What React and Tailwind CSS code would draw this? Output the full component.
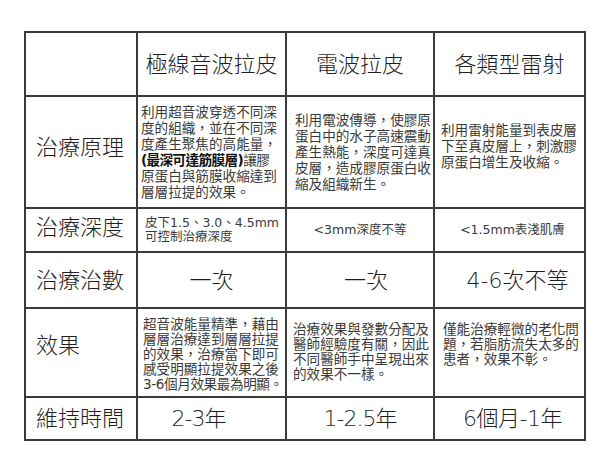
const font = { fontFamily: '"DejaVu Sans", "Noto Sans CJK TC", sans-serif' };

const cell = "border-2 border-[#3a3a3a] p-0";

const rows = [
  {
    label: "治療原理",
    h: "h-[112px]",
    labelCls: "align-top pt-[34px]",
    cells: [
      {
        cls: "align-top pt-[7px] pl-[3px] leading-[16px]",
        lines: [
          "利用超音波穿透不同深",
          "度的組織，並在不同深",
          "度產生聚焦的高能量，",
          <span className="tracking-[-0.6px]">
            <span className="font-bold text-[#111]">(最深可達筋膜層)</span>讓膠
          </span>,
          "原蛋白與筋膜收縮達到",
          "層層拉提的效果。",
        ],
      },
      {
        cls: "align-top pt-[15px] pl-[8px] leading-[16px]",
        lines: [
          "利用電波傳導，使膠原",
          "蛋白中的水子高速震動",
          "產生熱能，深度可達真",
          "皮層，造成膠原蛋白收",
          "縮及組織新生。",
        ],
      },
      {
        cls: "align-top pt-[25px] pl-[6px] leading-[16px]",
        lines: ["利用雷射能量到表皮層", "下至真皮層上，刺激膠", "原蛋白增生及收縮。"],
      },
    ],
  },
];

function Lines({ lines }) {
  return lines.map((l, i) => (
    <div key={i} className="whitespace-nowrap">
      {l}
    </div>
  ));
}

export default function App() {
  return (
    <div className="w-[600px] h-[459px] bg-white pt-[31px] pl-[24px]" style={font}>
      <table className="table-fixed border-collapse w-[560px] text-[#2a2a2a]">
        <colgroup>
          <col className="w-[112px]" />
          <col className="w-[149px]" />
          <col className="w-[148px]" />
          <col className="w-[151px]" />
        </colgroup>
        <tbody>
          <tr className="h-[64px] text-[22px] font-light text-[#1f1f1f]">
            <td className={cell}></td>
            <td className={`${cell} text-center`}>極線音波拉皮</td>
            <td className={`${cell} text-center`}>電波拉皮</td>
            <td className={`${cell} text-center`}>各類型雷射</td>
          </tr>
          {rows.map((r) => (
            <tr key={r.label} className={r.h}>
              <td className={`${cell} ${r.labelCls} pl-[10px] text-[22px] font-light text-[#1f1f1f]`}>{r.label}</td>
              {r.cells.map((c, i) => (
                <td key={i} className={`${cell} ${c.cls} text-[13.6px] text-[#3a3a3a]`}>
                  <Lines lines={c.lines} />
                </td>
              ))}
            </tr>
          ))}
          <tr className="h-[44px]">
            <td className={`${cell} pl-[10px] pb-[6px] text-[22px] font-light text-[#1f1f1f]`}>治療深度</td>
            <td className={`${cell} pl-[7px] text-[12.5px] leading-[14px] text-[#3a3a3a]`}>
              <div className="whitespace-nowrap">皮下1.5、3.0、4.5mm</div>
              <div className="whitespace-nowrap">可控制治療深度</div>
            </td>
            <td className={`${cell} text-center text-[12.5px] text-[#3a3a3a]`}>&lt;3mm深度不等</td>
            <td className={`${cell} text-center pl-[6px] text-[12.5px] text-[#3a3a3a]`}>&lt;1.5mm表淺肌膚</td>
          </tr>
          <tr className="h-[56px] text-[22px] font-light text-[#1f1f1f]">
            <td className={`${cell} pl-[10px]`}>治療治數</td>
            <td className={`${cell} text-center`}>一次</td>
            <td className={`${cell} text-center pl-[12px]`}>一次</td>
            <td className={`${cell} text-center pl-[16px]`}>4-6次不等</td>
          </tr>
          <tr className="h-[89px]">
            <td className={`${cell} pl-[10px] pb-[14px] text-[22px] font-light text-[#1f1f1f]`}>效果</td>
            <td className={`${cell} align-top pt-[8px] pl-[5px] text-[13.6px] leading-[15px] text-[#3a3a3a]`}>
              <Lines
                lines={[
                  "超音波能量精準，藉由",
                  "層層治療達到層層拉提",
                  "的效果，治療當下即可",
                  "感受明顯拉提效果之後",
                  <span className="tracking-[-0.4px]">3-6個月效果最為明顯。</span>,
                ]}
              />
            </td>
            <td className={`${cell} align-top pt-[13px] pl-[6px] text-[13.6px] leading-[15px] text-[#3a3a3a]`}>
              <Lines
                lines={["治療效果與發數分配及", "醫師經驗度有關，因此", "不同醫師手中呈現出來", "的效果不一樣。"]}
              />
            </td>
            <td className={`${cell} align-top pt-[13px] pl-[8px] text-[13.6px] leading-[15px] text-[#3a3a3a]`}>
              <Lines lines={["僅能治療輕微的老化問", "題，若脂肪流失太多的", "患者，效果不彰。"]} />
            </td>
          </tr>
          <tr className="h-[43px] text-[22px] font-light text-[#1f1f1f]">
            <td className={`${cell} pl-[10px]`}>維持時間</td>
            <td className={`${cell} text-center pr-[26px] tracking-[-1px]`}>2-3年</td>
            <td className={`${cell} text-center tracking-[-1px]`}>1-2.5年</td>
            <td className={`${cell} text-center pl-[6px] tracking-[-0.5px]`}>6個月-1年</td>
          </tr>
        </tbody>
      </table>
    </div>
  );
}
